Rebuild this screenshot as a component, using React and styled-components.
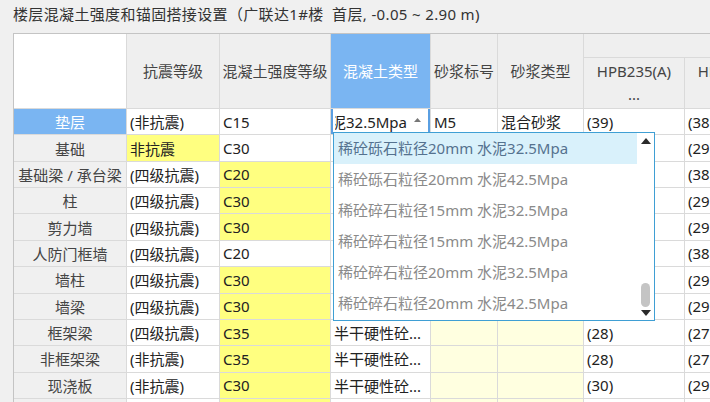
import React from 'react';
import styled, { createGlobalStyle } from 'styled-components';

const GlobalStyle = createGlobalStyle`
  html, body {
    margin: 0;
    padding: 0;
    background: #f0f0f0;
    overflow: hidden;
  }
  body {
    font-family: "Noto Sans", "Noto Sans CJK SC", sans-serif;
    font-size: 15px;
    color: #333;
  }
`;

const YELLOW = '#ffff80';
const PALE = '#ffffe0';
const BLUE = '#7ab5f2';

const rows = [
  { name: '垫层', seismic: '(非抗震)', grade: 'C15', type: null, mortar: 'M5', mortarType: '混合砂浆', a: '(39)', b: '(38)', active: true },
  { name: '基础', seismic: '非抗震', seismicHl: true, grade: 'C30', type: '普通砼', mortar: 'M5', mortarType: '混合砂浆', a: '(30)', b: '(29)' },
  { name: '基础梁 / 承台梁', seismic: '(四级抗震)', grade: 'C20', gradeHl: true, type: '普通砼', mortar: 'M5', mortarType: '混合砂浆', a: '(39)', b: '(38)' },
  { name: '柱', seismic: '(四级抗震)', grade: 'C30', gradeHl: true, type: '普通砼', a: '(30)', b: '(29)' },
  { name: '剪力墙', seismic: '(四级抗震)', grade: 'C30', gradeHl: true, type: '普通砼', a: '(30)', b: '(29)' },
  { name: '人防门框墙', seismic: '(四级抗震)', grade: 'C20', type: '普通砼', a: '(39)', b: '(38)' },
  { name: '墙柱', seismic: '(四级抗震)', grade: 'C30', gradeHl: true, type: '普通砼', a: '(30)', b: '(29)' },
  { name: '墙梁', seismic: '(四级抗震)', grade: 'C30', gradeHl: true, type: '普通砼', a: '(30)', b: '(29)' },
  { name: '框架梁', seismic: '(四级抗震)', grade: 'C35', gradeHl: true, type: '半干硬性砼...', pale: true, a: '(28)', b: '(27)' },
  { name: '非框架梁', seismic: '(非抗震)', grade: 'C35', gradeHl: true, type: '半干硬性砼...', pale: true, a: '(28)', b: '(27)' },
  { name: '现浇板', seismic: '(非抗震)', grade: 'C30', gradeHl: true, type: '半干硬性砼...', pale: true, a: '(30)', b: '(29)' },
  { name: '楼梯', seismic: '(非抗震)', grade: 'C30', gradeHl: true, type: '半干硬性砼...', pale: true, a: '(30)', b: '(29)' },
];

const options = [
  '稀砼砾石粒径20mm 水泥32.5Mpa',
  '稀砼砾石粒径20mm 水泥42.5Mpa',
  '稀砼碎石粒径15mm 水泥32.5Mpa',
  '稀砼碎石粒径15mm 水泥42.5Mpa',
  '稀砼碎石粒径20mm 水泥32.5Mpa',
  '稀砼碎石粒径20mm 水泥42.5Mpa',
];

const Page = styled.div`
  padding: 4px 0 0 13px;
`;

const Title = styled.div`
  height: 21px;
  line-height: 21px;
  margin-bottom: 8px;
  font-size: 15px;
  letter-spacing: 0.35px;
  color: #333;
  white-space: pre;
`;

const Grid = styled.div`
  display: grid;
  grid-template-columns: 112px 92px 110px 99px 66px 85px 100px 100px;
  grid-template-rows: 23px 50px repeat(12, 25.36px);
  gap: 1px;
  background: #dadada;
  border-left: 1px solid #c4c4c4;
  border-top: 1px solid #c4c4c4;
  width: max-content;
`;

const HeadCell = styled.div`
  grid-row: ${(p) => (p.$tall ? '1 / span 2' : 'auto')};
  grid-column: ${(p) => (p.$wide ? 'span 2' : 'auto')};
  background: ${(p) => (p.$active ? BLUE : p.$blank ? '#fff' : '#efefef')};
  color: ${(p) => (p.$active ? '#fff' : '#444')};
  display: flex;
  flex-direction: column;
  align-items: center;
  justify-content: center;
  line-height: 23px;
  white-space: nowrap;
  overflow: hidden;
`;

const RowHead = styled.div`
  background: ${(p) => (p.$active ? BLUE : '#f0f0f0')};
  color: ${(p) => (p.$active ? '#fff' : '#444')};
  display: flex;
  align-items: center;
  justify-content: center;
  white-space: nowrap;
  overflow: hidden;
`;

const Cell = styled.div`
  background: ${(p) => p.$bg || '#fff'};
  color: #222;
  display: flex;
  align-items: center;
  padding-left: 3px;
  white-space: nowrap;
  overflow: hidden;
`;

const EditCell = styled.div`
  position: relative;
  background: #fff;
  border-left: 2px solid #5a9fe2;
  border-right: 2px solid #5a9fe2;
  display: flex;
  align-items: center;
`;

const EditText = styled.div`
  margin-left: 2px;
  width: 72px;
  overflow: hidden;
  display: flex;
  justify-content: flex-end;
  white-space: nowrap;
  color: #222;
`;

const Caret = styled.div`
  flex: 1;
  display: flex;
  justify-content: center;
  align-items: center;
  padding-bottom: 3px;
`;

const Dropdown = styled.div`
  position: absolute;
  left: 0;
  top: 23px;
  z-index: 10;
  width: 322px;
  height: 189px;
  box-sizing: border-box;
  background: #fff;
  border: 1px solid #3f9fd4;
  display: flex;
`;

const List = styled.div`
  flex: 1;
  display: flex;
  flex-direction: column;
`;

const Option = styled.div`
  height: 31px;
  line-height: 31px;
  padding-left: 4px;
  white-space: nowrap;
  background: ${(p) => (p.$selected ? '#d9f1fb' : 'transparent')};
  color: ${(p) => (p.$selected ? '#55728f' : '#8a8a8a')};
`;

const Track = styled.div`
  width: 17px;
  display: flex;
  flex-direction: column;
  align-items: center;
  padding: 5px 0 4px;
`;

const Thumb = styled.div`
  margin-top: auto;
  margin-bottom: 3px;
  width: 9px;
  height: 24px;
  border-radius: 5px;
  background: #c4c4c4;
`;

const Arrow = ({ down }) => (
  <svg width="10" height="6" viewBox="0 0 10 6">
    <polygon points={down ? '0,0 10,0 5,6' : '0,6 5,0 10,6'} fill="#2b2b2b" />
  </svg>
);

const App = () => (
  <Page>
    <GlobalStyle />
    <Title>{'楼层混凝土强度和锚固搭接设置（广联达1#楼  首层, -0.05 ~ 2.90 m)'}</Title>
    <Grid>
      <HeadCell $tall $blank />
      <HeadCell $tall>抗震等级</HeadCell>
      <HeadCell $tall>混凝土强度等级</HeadCell>
      <HeadCell $tall $active>混凝土类型</HeadCell>
      <HeadCell $tall>砂浆标号</HeadCell>
      <HeadCell $tall>砂浆类型</HeadCell>
      <HeadCell $wide />
      <HeadCell>
        <span>HPB235(A)</span>
        <span>...</span>
      </HeadCell>
      <HeadCell>
        <span>HRB335(B)</span>
        <span>...</span>
      </HeadCell>

      {rows.map((r) => (
        <React.Fragment key={r.name}>
          <RowHead $active={r.active}>{r.name}</RowHead>
          <Cell $bg={r.seismicHl ? YELLOW : undefined}>{r.seismic}</Cell>
          <Cell $bg={r.gradeHl ? YELLOW : undefined}>{r.grade}</Cell>
          {r.type === null ? (
            <EditCell>
              <EditText>水泥32.5Mpa</EditText>
              <Caret>
                <svg width="7" height="4" viewBox="0 0 7 4">
                  <polygon points="0,4 3.5,0 7,4" fill="#777" />
                </svg>
              </Caret>
              <Dropdown>
                <List>
                  {options.map((o, i) => (
                    <Option key={o} $selected={i === 0}>{o}</Option>
                  ))}
                </List>
                <Track>
                  <Arrow />
                  <Thumb />
                  <Arrow down />
                </Track>
              </Dropdown>
            </EditCell>
          ) : (
            <Cell>{r.type}</Cell>
          )}
          <Cell $bg={r.pale ? PALE : undefined}>{r.mortar}</Cell>
          <Cell $bg={r.pale ? PALE : undefined}>{r.mortarType}</Cell>
          <Cell>{r.a}</Cell>
          <Cell>{r.b}</Cell>
        </React.Fragment>
      ))}
    </Grid>
  </Page>
);

export default App;
